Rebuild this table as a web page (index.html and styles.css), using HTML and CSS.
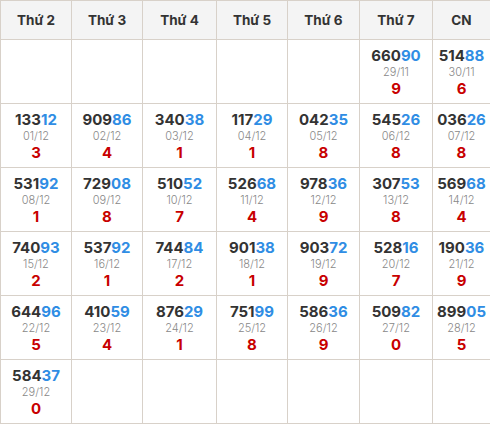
FILE: index.html
```html
<!DOCTYPE html>
<html lang="vi">
<head>
<meta charset="utf-8">
<link rel="stylesheet" href="styles.css">
</head>
<body>
<table class="cal">
  <colgroup>
    <col class="c1"><col class="c2"><col class="c3"><col class="c4"><col class="c5"><col class="c6"><col class="c7">
  </colgroup>
  <thead>
    <tr><th>Thứ 2</th><th>Thứ 3</th><th>Thứ 4</th><th>Thứ 5</th><th>Thứ 6</th><th>Thứ 7</th><th>CN</th></tr>
  </thead>
  <tbody>
    <tr>
      <td></td><td></td><td></td><td></td><td></td>
      <td><div class="num">660<span class="hi">90</span></div><div class="date">29/11</div><div class="dig">9</div></td>
      <td><div class="num">514<span class="hi">88</span></div><div class="date">30/11</div><div class="dig">6</div></td>
    </tr>
    <tr>
      <td><div class="num">133<span class="hi">12</span></div><div class="date">01/12</div><div class="dig">3</div></td>
      <td><div class="num">909<span class="hi">86</span></div><div class="date">02/12</div><div class="dig">4</div></td>
      <td><div class="num">340<span class="hi">38</span></div><div class="date">03/12</div><div class="dig">1</div></td>
      <td><div class="num">117<span class="hi">29</span></div><div class="date">04/12</div><div class="dig">1</div></td>
      <td><div class="num">042<span class="hi">35</span></div><div class="date">05/12</div><div class="dig">8</div></td>
      <td><div class="num">545<span class="hi">26</span></div><div class="date">06/12</div><div class="dig">8</div></td>
      <td><div class="num">036<span class="hi">26</span></div><div class="date">07/12</div><div class="dig">8</div></td>
    </tr>
    <tr>
      <td><div class="num">531<span class="hi">92</span></div><div class="date">08/12</div><div class="dig">1</div></td>
      <td><div class="num">729<span class="hi">08</span></div><div class="date">09/12</div><div class="dig">8</div></td>
      <td><div class="num">510<span class="hi">52</span></div><div class="date">10/12</div><div class="dig">7</div></td>
      <td><div class="num">526<span class="hi">68</span></div><div class="date">11/12</div><div class="dig">4</div></td>
      <td><div class="num">978<span class="hi">36</span></div><div class="date">12/12</div><div class="dig">9</div></td>
      <td><div class="num">307<span class="hi">53</span></div><div class="date">13/12</div><div class="dig">8</div></td>
      <td><div class="num">569<span class="hi">68</span></div><div class="date">14/12</div><div class="dig">4</div></td>
    </tr>
    <tr>
      <td><div class="num">740<span class="hi">93</span></div><div class="date">15/12</div><div class="dig">2</div></td>
      <td><div class="num">537<span class="hi">92</span></div><div class="date">16/12</div><div class="dig">1</div></td>
      <td><div class="num">744<span class="hi">84</span></div><div class="date">17/12</div><div class="dig">2</div></td>
      <td><div class="num">901<span class="hi">38</span></div><div class="date">18/12</div><div class="dig">1</div></td>
      <td><div class="num">903<span class="hi">72</span></div><div class="date">19/12</div><div class="dig">9</div></td>
      <td><div class="num">528<span class="hi">16</span></div><div class="date">20/12</div><div class="dig">7</div></td>
      <td><div class="num">190<span class="hi">36</span></div><div class="date">21/12</div><div class="dig">9</div></td>
    </tr>
    <tr>
      <td><div class="num">644<span class="hi">96</span></div><div class="date">22/12</div><div class="dig">5</div></td>
      <td><div class="num">410<span class="hi">59</span></div><div class="date">23/12</div><div class="dig">4</div></td>
      <td><div class="num">876<span class="hi">29</span></div><div class="date">24/12</div><div class="dig">1</div></td>
      <td><div class="num">751<span class="hi">99</span></div><div class="date">25/12</div><div class="dig">8</div></td>
      <td><div class="num">586<span class="hi">36</span></div><div class="date">26/12</div><div class="dig">9</div></td>
      <td><div class="num">509<span class="hi">82</span></div><div class="date">27/12</div><div class="dig">0</div></td>
      <td><div class="num">899<span class="hi">05</span></div><div class="date">28/12</div><div class="dig">5</div></td>
    </tr>
    <tr>
      <td><div class="num">584<span class="hi">37</span></div><div class="date">29/12</div><div class="dig">0</div></td>
      <td></td><td></td><td></td><td></td><td></td><td></td>
    </tr>
  </tbody>
</table>
</body>
</html>
```

FILE: styles.css
```css
html, body {
  margin: 0;
  padding: 0;
  background: #fff;
}
body {
  font-family: Inter, "Open Sans", "DejaVu Sans", sans-serif;
  color: #333;
}
.cal {
  width: 490px;
  border-collapse: collapse;
  table-layout: fixed;
}
.c1 { width: 71px; }
.c2 { width: 71px; }
.c3 { width: 74px; }
.c4 { width: 71px; }
.c5 { width: 72px; }
.c6 { width: 73px; }
.c7 { width: 58px; }
.cal th, .cal td {
  border: 1px solid #d8d1c9;
  text-align: center;
  padding: 0;
}
.cal th {
  height: 38px;
  background: #f4f4f4;
  font-size: 13.5px;
  font-weight: 700;
  color: #333;
}
.cal td {
  height: 63px;
  vertical-align: middle;
}
.num {
  font-size: 15px;
  font-weight: 700;
  line-height: 17px;
  color: #333;
}
.hi { color: #2f8de4; }
.date {
  font-size: 11px;
  font-weight: 300;
  line-height: 16px;
  color: #888;
}
.dig {
  font-size: 15px;
  font-weight: 700;
  line-height: 17px;
  color: #c80000;
}
```
